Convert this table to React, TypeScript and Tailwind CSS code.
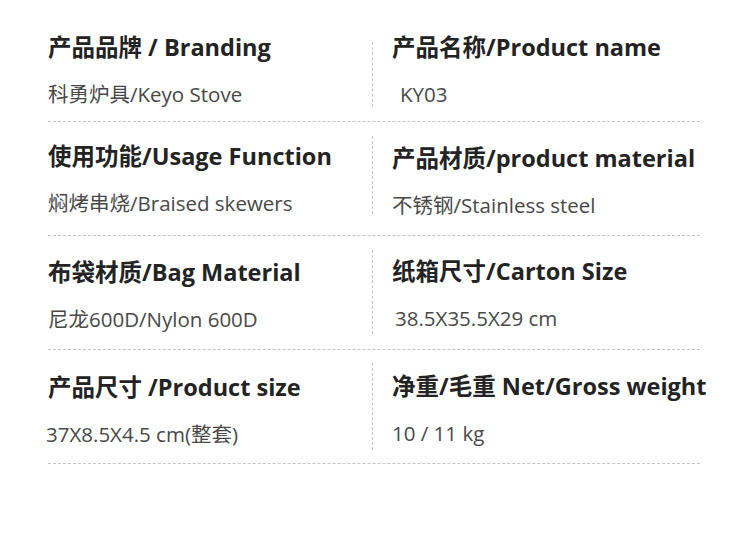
import React from "react";

type Row = {
  leftTitle: string;
  leftValue: string;
  rightTitle: string;
  rightValue: string;
  leftPad: string;
  rightPad: string;
  divider: string;
  leftValueCls?: string;
  rightValueCls?: string;
};

const rows: Row[] = [
  {
    leftTitle: "产品品牌 / Branding",
    leftValue: "科勇炉具/Keyo Stove",
    rightTitle: "产品名称/Product name",
    rightValue: "KY03",
    leftPad: "pt-[24px]",
    rightPad: "pt-[24px]",
    divider: "mt-[34px] mb-[14px]",
    rightValueCls: "pl-[8px]",
  },
  {
    leftTitle: "使用功能/Usage Function",
    leftValue: "焖烤串烧/Braised skewers",
    rightTitle: "产品材质/product material",
    rightValue: "不锈钢/Stainless steel",
    leftPad: "pt-[19px]",
    rightPad: "pt-[21px]",
    divider: "mt-[14px] mb-[21px]",
  },
  {
    leftTitle: "布袋材质/Bag Material",
    leftValue: "尼龙600D/Nylon 600D",
    rightTitle: "纸箱尺寸/Carton Size",
    rightValue: "38.5X35.5X29 cm",
    leftPad: "pt-[21px]",
    rightPad: "pt-[20px]",
    divider: "mt-[14px] mb-[15px]",
    rightValueCls: "pl-[3px]",
  },
  {
    leftTitle: "产品尺寸 /Product size",
    leftValue: "37X8.5X4.5 cm(整套)",
    rightTitle: "净重/毛重 Net/Gross weight",
    rightValue: "10 / 11 kg",
    leftPad: "pt-[22px]",
    rightPad: "pt-[21px]",
    divider: "mt-[13px] mb-[13px]",
    leftValueCls: "-ml-[2px]",
  },
];

const Title = ({ children }: { children: React.ReactNode }) => (
  <div className="text-[23.5px] leading-[30px] font-bold text-[#232323] whitespace-nowrap">
    {children}
  </div>
);

const Value = ({ children, className = "" }: { children: React.ReactNode; className?: string }) => (
  <div className={`mt-[18px] text-[20.5px] leading-[28px] text-[#484848] whitespace-nowrap ${className}`}>
    {children}
  </div>
);

export default function App() {
  return (
    <div
      className="w-[750px] h-[557px] bg-white pt-[8px] pl-[48px]"
      style={{ fontFamily: "'Open Sans', 'Noto Sans CJK SC', sans-serif" }}
    >
      <div className="w-[652px]">
        {rows.map((r, i) => (
          <div key={i} className="flex h-[114px] border-b border-dashed border-[#c4c4c4]">
            <div className={`w-[324px] shrink-0 ${r.leftPad}`}>
              <Title>{r.leftTitle}</Title>
              <Value className={r.leftValueCls}>{r.leftValue}</Value>
            </div>
            <div className={`w-0 shrink-0 border-l border-dashed border-[#c4c4c4] ${r.divider}`}></div>
            <div className={`flex-1 min-w-0 pl-[19px] ${r.rightPad}`}>
              <Title>{r.rightTitle}</Title>
              <Value className={r.rightValueCls}>{r.rightValue}</Value>
            </div>
          </div>
        ))}
      </div>
    </div>
  );
}
